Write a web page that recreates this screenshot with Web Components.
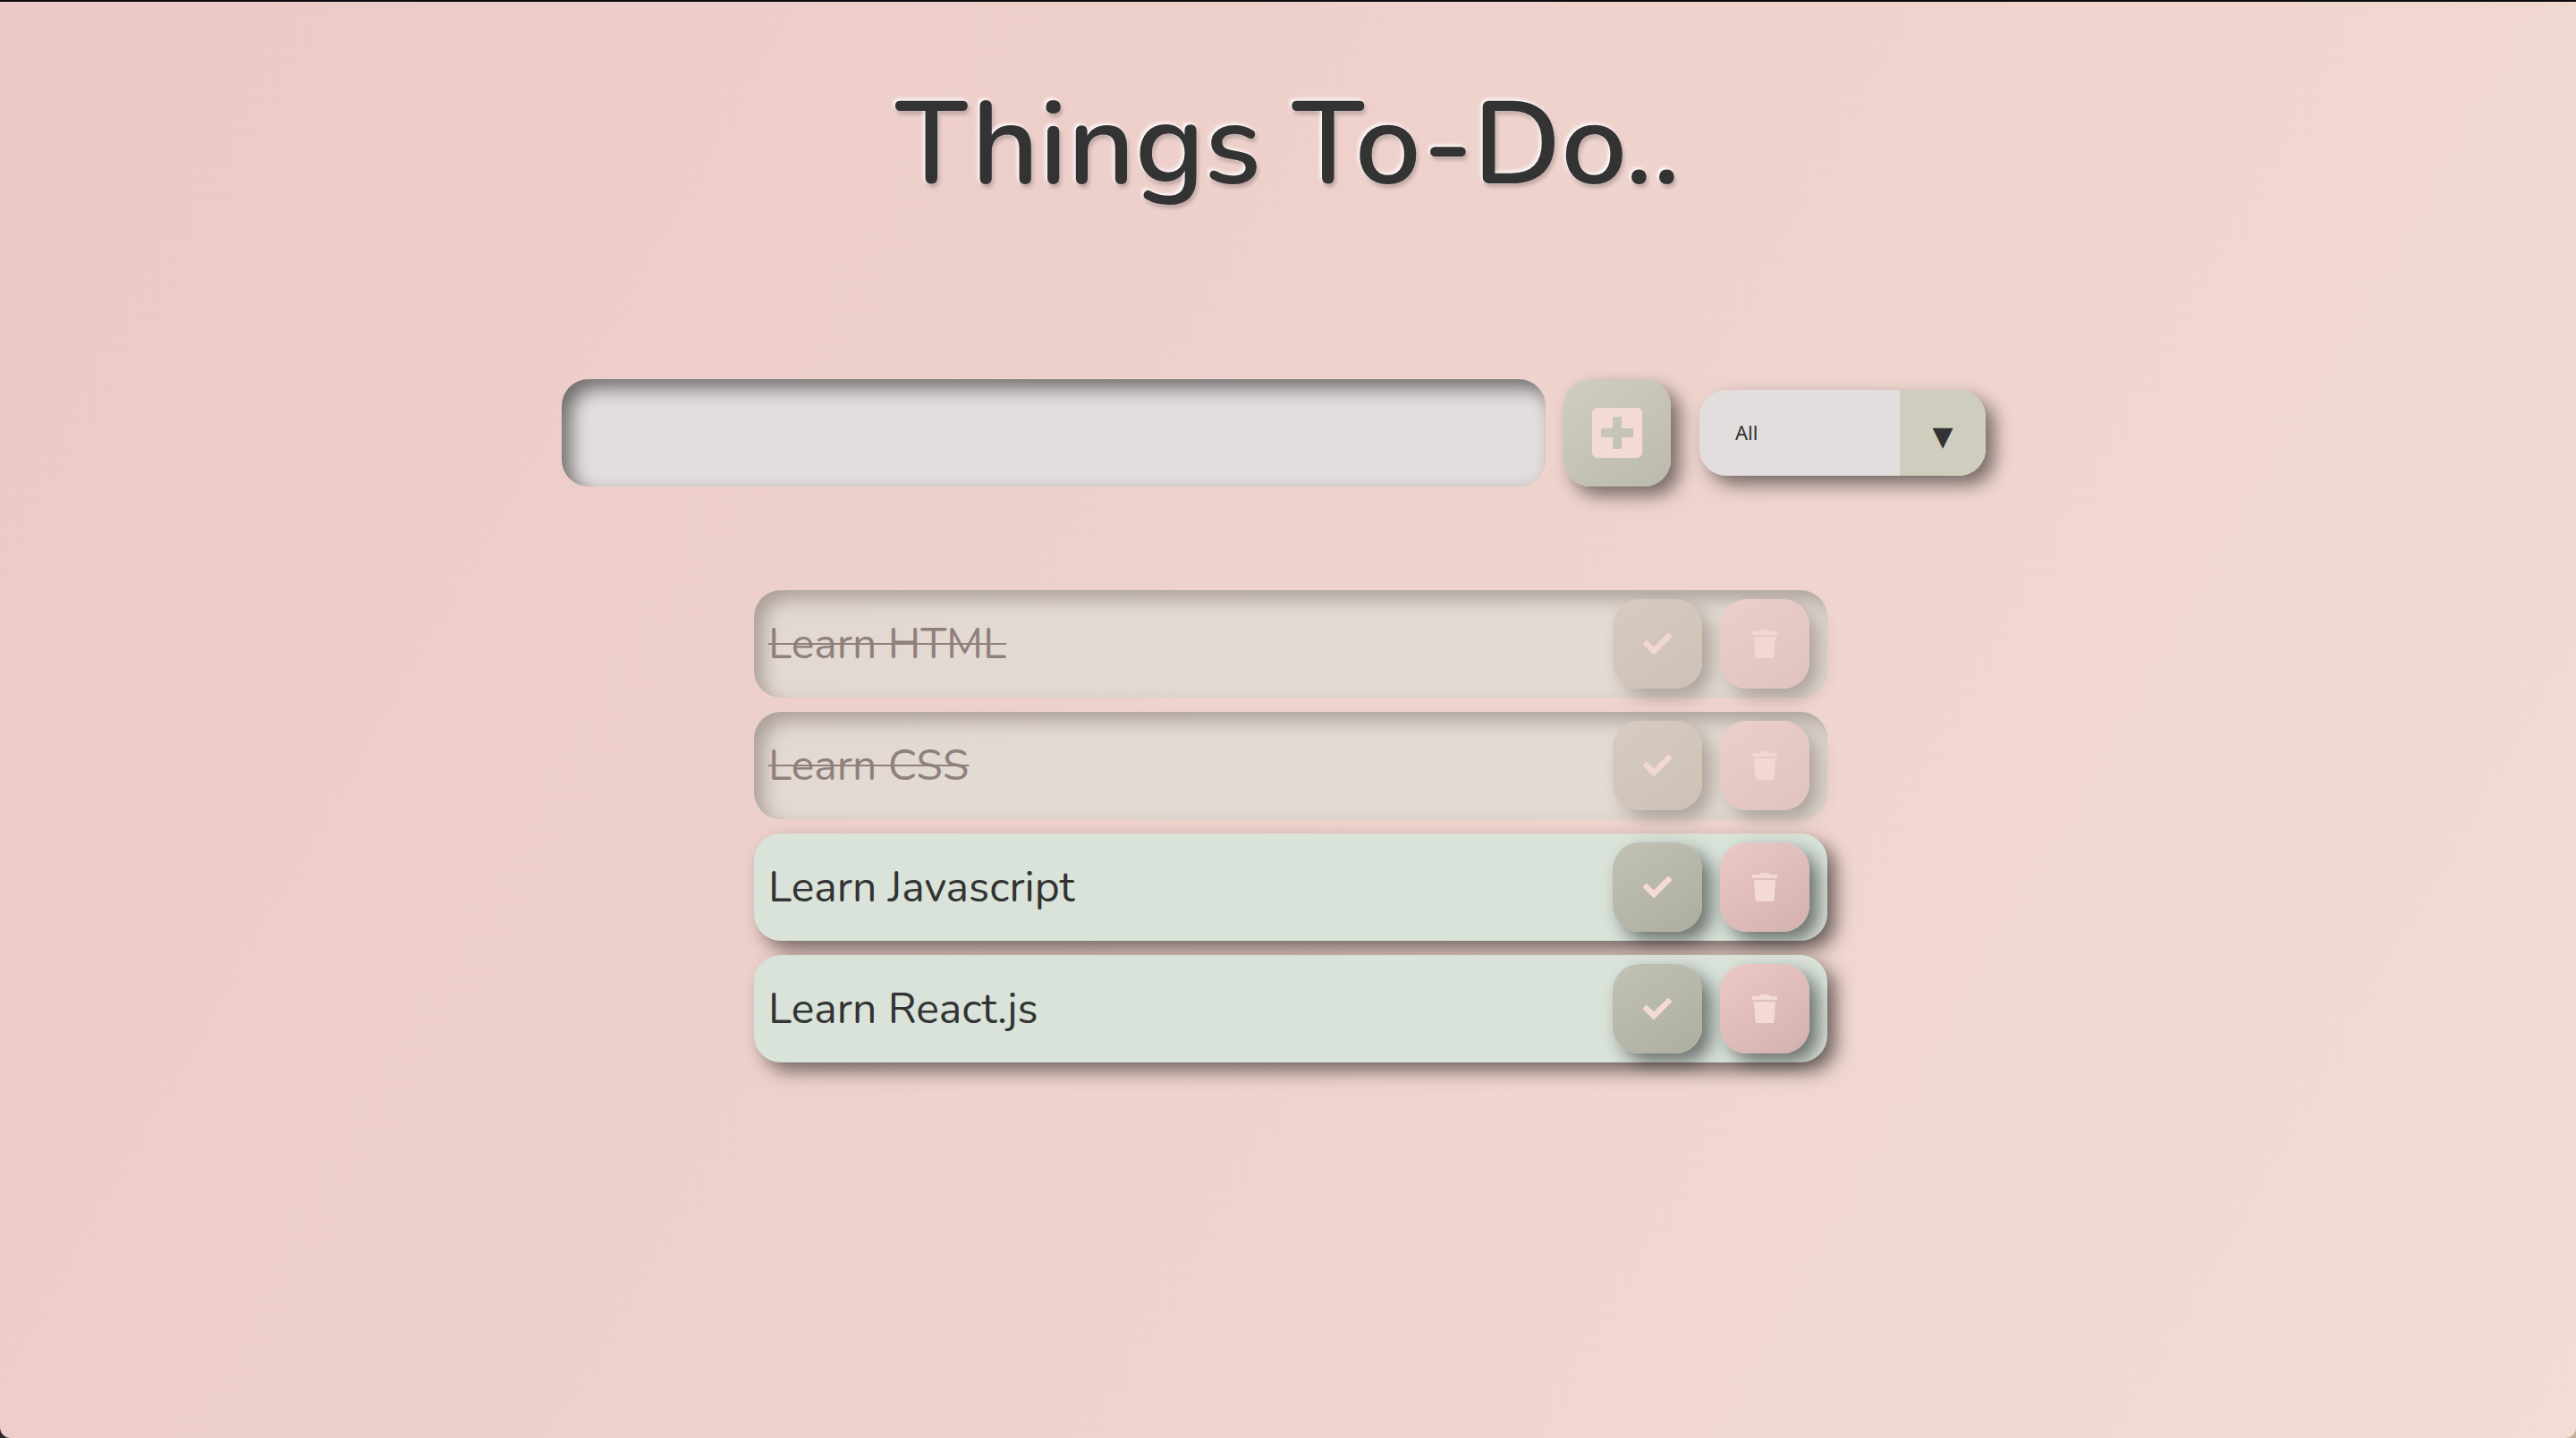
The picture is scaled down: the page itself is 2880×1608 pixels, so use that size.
<!DOCTYPE html>
<html lang="en">
<head>
<meta charset="utf-8">
<title>Things To-Do..</title>
<style>
  html { background: linear-gradient(90deg, #2b2826 50%, #bfae96 50%); }
  body { margin: 0; color: #333333; font-family: Nunito, Lato, sans-serif; }
</style>
</head>
<body>
<todo-app>
  <todo-title slot="title">Things To-Do..</todo-title>
  <todo-form slot="form"></todo-form>
  <todo-list slot="list">
    <todo-item completed>Learn HTML</todo-item>
    <todo-item completed>Learn CSS</todo-item>
    <todo-item>Learn Javascript</todo-item>
    <todo-item>Learn React.js</todo-item>
  </todo-list>
</todo-app>
<script>
  const icons = {
    plus: ['0 0 448 512', 'M400 32H48C21.5 32 0 53.5 0 80v352c0 26.5 21.5 48 48 48h352c26.5 0 48-21.5 48-48V80c0-26.5-21.5-48-48-48zm-32 252c0 6.6-5.4 12-12 12h-92v92c0 6.6-5.4 12-12 12h-56c-6.6 0-12-5.4-12-12v-92H92c-6.6 0-12-5.4-12-12v-56c0-6.6 5.4-12 12-12h92v-92c0-6.6 5.4-12 12-12h56c6.6 0 12 5.4 12 12v92h92c6.6 0 12 5.4 12 12v56z'],
    check: ['0 0 512 512', 'M173.898 439.404l-166.4-166.4c-9.997-9.997-9.997-26.206 0-36.204l36.203-36.204c9.997-9.998 26.207-9.998 36.204 0L192 312.69 432.095 72.596c9.997-9.997 26.207-9.997 36.204 0l36.203 36.204c9.997 9.997 9.997 26.206 0 36.204l-294.4 294.401c-9.998 9.997-26.207 9.997-36.204-.001z'],
    trash: ['0 0 448 512', 'M432 32H312l-9.4-18.7A24 24 0 0 0 281.1 0H166.8a23.72 23.72 0 0 0-21.4 13.3L136 32H16A16 16 0 0 0 0 48v32a16 16 0 0 0 16 16h416a16 16 0 0 0 16-16V48a16 16 0 0 0-16-16zM53.2 467a48 48 0 0 0 47.9 45h245.8a48 48 0 0 0 47.9-45L416 128H32z'],
  };

  function define(name, html, setup) {
    const template = document.createElement('template');
    template.innerHTML = html;
    customElements.define(name, class extends HTMLElement {
      constructor() {
        super();
        this.attachShadow({ mode: 'open' }).append(template.content.cloneNode(true));
      }
      connectedCallback() { if (setup) setup(this); }
    });
  }

  define('todo-app', `
    <style>
      :host {
        --shadow: 10px 10px 20px rgba(0, 0, 0, .5);
        --radius: 30px;
        display: flex; flex-direction: column; box-sizing: border-box;
        min-height: 100vh; border-top: 2px solid #0b0b0b;
        border-radius: 0 0 12px 12px;
        background: linear-gradient(120deg, #ebc9c6, #f2dcd3);
        background-origin: border-box;
      }
      main { display: flex; flex-direction: column; }
    </style>
    <main><slot name="title"></slot><slot name="form"></slot><slot name="list"></slot></main>`);

  define('todo-title', `
    <style>
      :host { display: block; padding-top: 80px; }
      h1 {
        margin: 0; text-align: center; font-size: 131px; line-height: 160px; font-weight: 600;
        text-shadow: -2px -2px 4px #ffffff, 2px 4px 4px rgba(0, 0, 0, .2);
      }
    </style>
    <h1><slot></slot></h1>`);

  define('todo-button', `
    <style>
      :host { display: block; width: 100px; height: 100px; }
      :host([kind="plus"]) { width: 120px; height: 120px; }
      button {
        display: flex; align-items: center; justify-content: center;
        width: 100%; height: 100%; margin: 0; padding: 0; border: 0;
        border-radius: var(--radius); box-shadow: var(--shadow); cursor: pointer;
        color: #f3dbd3; background: linear-gradient(145deg, #c1c2b3, #adae9f);
      }
      :host([kind="plus"]) button { background: linear-gradient(145deg, #d0cfbf, #bab9ab); }
      :host([kind="trash"]) button { background: linear-gradient(145deg, #eac9c7, #d3b1af); }
      svg { display: block; height: 32px; fill: currentColor; }
      :host([kind="plus"]) svg { height: 64px; }
    </style>
    <button type="button"><svg aria-hidden="true"><path/></svg></button>`,
    el => {
      const [box, d] = icons[el.getAttribute('kind')];
      const svg = el.shadowRoot.querySelector('svg');
      svg.setAttribute('viewBox', box);
      svg.firstElementChild.setAttribute('d', d);
      el.shadowRoot.querySelector('button').setAttribute('aria-label', el.getAttribute('label'));
    });

  define('todo-filter', `
    <style>
      :host {
        display: grid; grid-template-columns: 1fr 96px; width: 320px; height: 96px;
        border-radius: var(--radius); overflow: hidden; box-shadow: var(--shadow);
        background: #e3dddd;
      }
      select {
        grid-area: 1 / 1 / 2 / 3; appearance: none; margin: 0; border: 0; outline: 0;
        padding: 0 40px 2px; background: none; color: inherit; cursor: pointer;
        font: 22px "Noto Sans", sans-serif;
      }
      span {
        grid-area: 1 / 2 / 2 / 3; pointer-events: none; padding-top: 6px;
        display: flex; align-items: center; justify-content: center;
        background: #cfcdbd; font: 30px "DejaVu Sans", sans-serif;
      }
    </style>
    <select aria-label="Filter">
      <option>All</option><option>Completed</option><option>Uncompleted</option>
    </select>
    <span aria-hidden="true">▼</span>`);

  define('todo-form', `
    <style>
      :host { display: block; padding-top: 182px; }
      form { display: flex; align-items: center; justify-content: center; }
      input {
        box-sizing: border-box; width: 1100px; height: 120px; margin: 0 20px 0 0;
        padding: 0 32px; border: 0; outline: 0; border-radius: var(--radius);
        background: #e3dddd; color: inherit; font: inherit; font-size: 48px;
        box-shadow: inset 10px 10px 20px rgba(0, 0, 0, .5);
      }
      todo-filter { margin: 0 32px; }
    </style>
    <form>
      <input type="text" aria-label="New task">
      <todo-button kind="plus" label="Add"></todo-button>
      <todo-filter></todo-filter>
    </form>`);

  define('todo-list', `
    <style>
      :host { display: flex; justify-content: center; padding: 116px 0 116px 6px; }
      div { display: flex; flex-direction: column; gap: 16px; width: 1200px; }
    </style>
    <div role="list"><slot></slot></div>`);

  define('todo-item', `
    <style>
      :host {
        display: flex; align-items: center; gap: 20px; box-sizing: border-box;
        height: 120px; padding: 0 20px 0 16px; border-radius: var(--radius);
        background: #d9e3da; box-shadow: var(--shadow);
      }
      :host([completed]) { opacity: .5; box-shadow: inset 10px 10px 20px rgba(0, 0, 0, .5); }
      p { flex: 1; margin: 0; font-size: 48px; line-height: 64px; }
      :host([completed]) p { text-decoration: line-through 2px; }
    </style>
    <p><slot></slot></p>
    <todo-button kind="check" label="Complete"></todo-button>
    <todo-button kind="trash" label="Delete"></todo-button>`,
    el => el.setAttribute('role', 'listitem'));
</script>
</body>
</html>
